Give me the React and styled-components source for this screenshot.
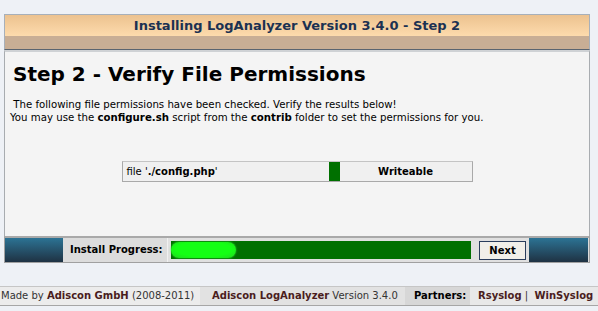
import React from "react";
import styled, { createGlobalStyle } from "styled-components";

const GlobalStyle = createGlobalStyle`
  body {
    margin: 0;
    background: #eef1f6;
    font-family: "DejaVu Sans", Verdana, sans-serif;
    color: #000;
  }
`;

const Page = styled.div`
  width: 598px;
  height: 311px;
  padding-top: 14px;
  box-sizing: border-box;
  overflow: hidden;
`;

const Frame = styled.div`
  margin-left: 4px;
  width: 586px;
`;

const Header = styled.div`
  border: 1px solid #a7b0ba;
  border-bottom: 1px solid #5a6470;
`;

const TitleBar = styled.div`
  height: 21px;
  line-height: 21px;
  text-align: center;
  background: linear-gradient(#ecc28f, #fddbad);
  color: #1b3152;
  font-weight: bold;
  font-size: 13px;
`;

const Band = styled.div`
  height: 13px;
  background: #c8ae95;
`;

const Content = styled.div`
  background: #f4f4f4;
  border-top: 2px solid #cfd2d5;
  border-left: 1px solid #a8acb0;
  border-right: 1px solid #a8acb0;
  padding: 10px 0 54px 0;
`;

const Heading = styled.h1`
  margin: 0 0 0 8px;
  font-size: 20px;
  line-height: 24px;
  font-weight: bold;
`;

const Intro = styled.p`
  margin: 12px 0 0 5px;
  font-size: 10.2px;
  line-height: 13px;
`;

const CheckRow = styled.div`
  margin: 37px auto 0;
  width: 349px;
  height: 19px;
  display: flex;
  border: 1px solid #a9a9a9;
  border-top-color: #c4c4c4;
  background: #f0f0f0;
  font-size: 10px;
  line-height: 19px;
`;

const FileCell = styled.div`
  width: 206px;
  padding-left: 4px;
  box-sizing: border-box;
`;

const StatusMark = styled.div`
  width: 11px;
  background: ${(p) => p.color};
`;

const StatusCell = styled.div`
  flex: 1;
  text-align: center;
  font-weight: bold;
`;

const Bar = styled.div`
  display: flex;
  height: 24px;
  border: 1px solid #a0a0a0;
  border-top: 2px solid #a9a9a9;
  background: #dcdcdc;
  font-size: 10px;
  font-weight: bold;
`;

const BlueBlock = styled.div`
  width: ${(p) => p.w}px;
  background: linear-gradient(#2c7394, #1f3243);
`;

const LabelCell = styled.div`
  width: 105px;
  padding-left: 7px;
  box-sizing: border-box;
  line-height: 24px;
  border-right: 1px solid #f0f0f0;
`;

const ProgressCell = styled.div`
  width: 307px;
  padding: 3px 4px 3px 3px;
  box-sizing: border-box;
  background: #e0e0e0;
`;

const Track = styled.div`
  height: 18px;
  background: #007000;
  display: flex;
  align-items: center;
`;

const Fill = styled.div`
  height: 16px;
  border-radius: 8px;
  background: radial-gradient(ellipse at 50% 45%, #14ff14 60%, #22d422 100%);
  box-shadow: 0 0 2px #30e030;
`;

const NextCell = styled.div`
  width: 54px;
  padding: 3px 3px 0 4px;
  box-sizing: border-box;
  background: #e0e0e0;
`;

const NextButton = styled.button`
  width: 47px;
  height: 19px;
  padding: 0;
  border: 1px solid #2a3d5c;
  background: #f1efe9;
  font-family: inherit;
  font-size: 10px;
  font-weight: bold;
  color: #000;
`;

const Footer = styled.div`
  margin-top: 23px;
  display: flex;
  height: 18px;
  line-height: 18px;
  border-top: 1px solid #c6c6c6;
  border-bottom: 1px solid #a6a6a6;
  font-size: 10px;
  white-space: nowrap;
  background: #e8e8e8;
`;

const FooterCell = styled.div`
  width: ${(p) => p.w}px;
  padding-left: ${(p) => p.pad}px;
  box-sizing: border-box;
  background: ${(p) => p.bg};
  color: #333;
`;

const Name = styled.b`
  color: #4a1d1d;
`;

const Label = styled.b`
  color: #000;
`;

export default function App() {
  const progress = 65;
  return (
    <Page>
      <GlobalStyle />
      <Frame>
        <Header>
          <TitleBar>Installing LogAnalyzer Version 3.4.0 - Step 2</TitleBar>
          <Band />
        </Header>
        <Content>
          <Heading>Step 2 - Verify File Permissions</Heading>
          <Intro>
            {"\u00a0"}The following file permissions have been checked. Verify the results below!
            <br />
            You may use the <b>configure.sh</b> script from the <b>contrib</b> folder to set the permissions for you.
          </Intro>
          <CheckRow>
            <FileCell>
              file '<b>./config.php</b>'
            </FileCell>
            <StatusMark color="#007000" />
            <StatusCell>Writeable</StatusCell>
          </CheckRow>
        </Content>
        <Bar>
          <BlueBlock w={58} />
          <LabelCell>Install Progress:</LabelCell>
          <ProgressCell>
            <Track>
              <Fill style={{ width: progress }} />
            </Track>
          </ProgressCell>
          <NextCell>
            <NextButton>Next</NextButton>
          </NextCell>
          <BlueBlock w={59} />
        </Bar>
      </Frame>
      <Footer>
        <FooterCell w={200} pad={1} bg="#ececec">
          Made by <Name>Adiscon GmbH</Name> (2008-2011)
        </FooterCell>
        <FooterCell w={205} pad={12} bg="#e2e2e2">
          <Name>Adiscon LogAnalyzer</Name> Version 3.4.0
        </FooterCell>
        <FooterCell w={65} pad={9} bg="#d7d7d7">
          <Label>Partners:</Label>
        </FooterCell>
        <FooterCell w={128} pad={8} bg="#e8e8e8">
          <Name>Rsyslog</Name> |{"\u00a0\u00a0"}<Name>WinSyslog</Name>
        </FooterCell>
      </Footer>
    </Page>
  );
}
